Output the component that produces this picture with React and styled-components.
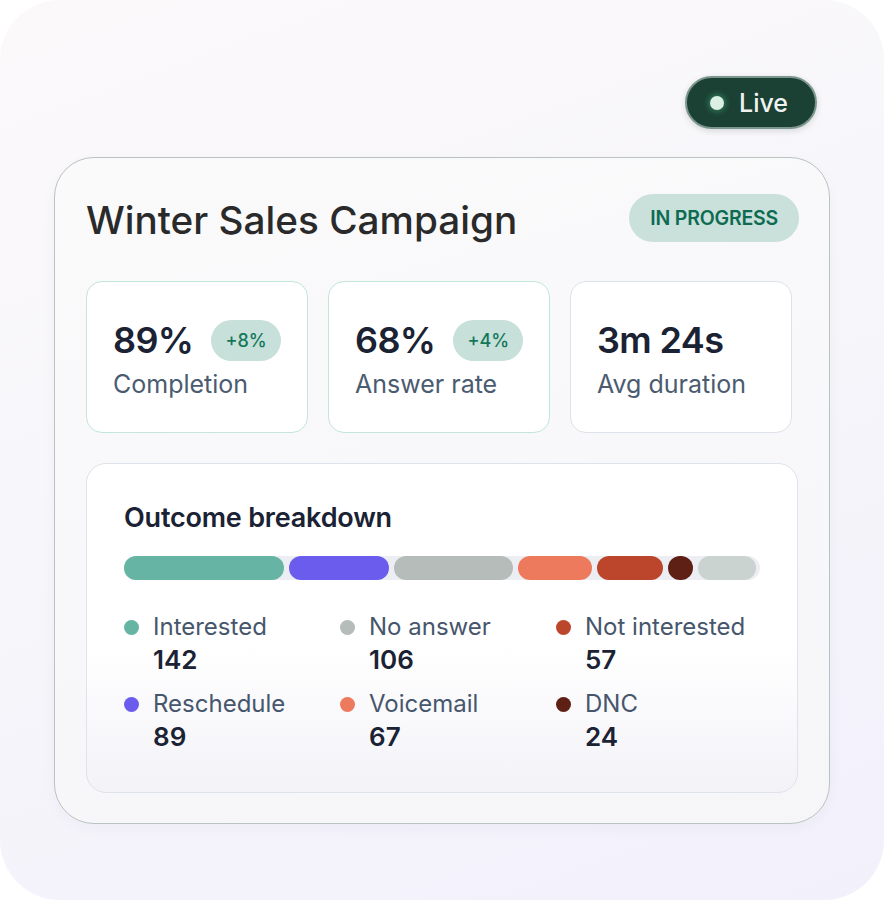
import styled, { createGlobalStyle } from "styled-components"

const GlobalStyle = createGlobalStyle`
  * { box-sizing: border-box; }
  body {
    margin: 0;
    background: #ffffff;
    font-family: Inter, "Noto Sans", sans-serif;
  }
`

const stats = [
  { value: "89%", label: "Completion", delta: "+8%" },
  { value: "68%", label: "Answer rate", delta: "+4%" },
  { value: "3m 24s", label: "Avg duration" },
]

const segments = [
  { color: "#66b5a4", w: 160 },
  { color: "#6b5ced", w: 100 },
  { color: "#b5bcba", w: 119 },
  { color: "#ee7a5e", w: 74 },
  { color: "#bb462b", w: 66 },
  { color: "#5e2015", w: 25 },
  { color: "#cbd3d0", w: 58 },
]

const outcomes = [
  { label: "Interested", count: 142, color: "#66b5a4" },
  { label: "No answer", count: 106, color: "#b5bcba" },
  { label: "Not interested", count: 57, color: "#bb462b" },
  { label: "Reschedule", count: 89, color: "#6b5ced" },
  { label: "Voicemail", count: 67, color: "#ee7a5e" },
  { label: "DNC", count: 24, color: "#5e2015" },
]

export default function App() {
  return (
    <>
      <GlobalStyle />
      <Page>
        <TopBar>
          <LivePill>
            <LiveDot />
            Live
          </LivePill>
        </TopBar>
        <Card>
          <Header>
            <Title>Winter Sales Campaign</Title>
            <Status>IN PROGRESS</Status>
          </Header>

          <Stats>
            {stats.map(s => (
              <StatCard key={s.label} $accent={!!s.delta}>
                <ValueRow>
                  <Value>{s.value}</Value>
                  {s.delta && <Delta>{s.delta}</Delta>}
                </ValueRow>
                <StatLabel>{s.label}</StatLabel>
              </StatCard>
            ))}
          </Stats>

          <Outcome>
            <OutcomeTitle>Outcome breakdown</OutcomeTitle>
            <Bar>
              {segments.map((seg, i) => (
                <Segment key={i} $color={seg.color} $w={seg.w} />
              ))}
            </Bar>
            <Legend>
              {outcomes.map(o => (
                <LegendItem key={o.label}>
                  <Dot $color={o.color} />
                  <LegendText>
                    <LegendLabel>{o.label}</LegendLabel>
                    <LegendCount>{o.count}</LegendCount>
                  </LegendText>
                </LegendItem>
              ))}
            </Legend>
          </Outcome>
        </Card>
      </Page>
    </>
  )
}

const Page = styled.div`
  width: 884px;
  height: 900px;
  border-radius: 60px;
  background: linear-gradient(160deg, #fbf9fa 0%, #f7f6fa 45%, #f2f0fb 100%);
  padding: 76px 67px 0 54px;
  display: flex;
  flex-direction: column;
`

const TopBar = styled.div`
  display: flex;
  justify-content: flex-end;
  margin-bottom: 28px;
`

const LivePill = styled.div`
  height: 53px;
  width: 132px;
  border-radius: 27px;
  background: #1b4034;
  border: 2px solid #7d968d;
  box-shadow: 0 2px 6px rgba(20, 50, 40, 0.15);
  display: flex;
  align-items: center;
  padding-left: 23px;
  gap: 15px;
  color: #eef3f0;
  font-size: 25px;
  font-weight: 500;
`

const LiveDot = styled.span`
  width: 14px;
  height: 14px;
  border-radius: 50%;
  background: #dcefe5;
  box-shadow: 0 0 6px 1px rgba(80, 200, 140, 0.55);
`

const Card = styled.section`
  width: 776px;
  height: 667px;
  border-radius: 40px;
  border: 1.5px solid #b9c3c0;
  background: linear-gradient(165deg, #fafafb 0%, #f6f6f9 100%);
  box-shadow: 0 4px 14px rgba(60, 60, 90, 0.04);
  padding: 36px 30px 0 31px;
`

const Header = styled.div`
  display: flex;
  align-items: center;
  justify-content: space-between;
  height: 48px;
`

const Title = styled.h1`
  margin: 0;
  font-size: 38.7px;
  font-weight: 500;
  color: #2a2a2b;
  padding-top: 4px;
`

const Status = styled.span`
  height: 48px;
  padding: 0 21px;
  border-radius: 24px;
  background: #c9e0db;
  color: #0e6b52;
  font-size: 19.5px;
  font-weight: 600;
  display: flex;
  align-items: center;
  letter-spacing: -0.2px;
`

const Stats = styled.div`
  margin-top: 39px;
  display: grid;
  grid-template-columns: repeat(3, 222px);
  gap: 20px;
`

const StatCard = styled.div`
  height: 152px;
  border-radius: 16px;
  background: #ffffff;
  border: 1.5px solid ${p => (p.$accent ? "#c2e5dc" : "#dde2ea")};
  padding: 4px 26px 0;
  display: flex;
  flex-direction: column;
  justify-content: center;
`

const ValueRow = styled.div`
  display: flex;
  align-items: center;
  gap: 18px;
  height: 42px;
`

const Value = styled.span`
  font-size: 36px;
  font-weight: 600;
  color: #1a2233;
  letter-spacing: -0.6px;
`

const Delta = styled.span`
  height: 41px;
  padding: 0 14px;
  border-radius: 21px;
  background: #c7e0da;
  color: #14775a;
  font-size: 18px;
  font-weight: 500;
  display: flex;
  align-items: center;
`

const StatLabel = styled.div`
  margin-top: 8px;
  font-size: 25px;
  color: #4b5b70;
`

const Outcome = styled.div`
  margin-top: 30px;
  width: 712px;
  height: 330px;
  border-radius: 20px;
  border: 1.5px solid #dfe3ea;
  background: linear-gradient(180deg, #ffffff 0%, #ffffff 55%, #f3f2f7 100%);
  padding: 37px 38px 0 37px;
`

const OutcomeTitle = styled.h2`
  margin: 0;
  font-size: 27px;
  font-weight: 600;
  color: #1a2233;
  letter-spacing: -0.2px;
`

const Bar = styled.div`
  margin-top: 22px;
  width: 636px;
  height: 24px;
  border-radius: 12px;
  background: #eceef3;
  display: flex;
  gap: 5px;
`

const Segment = styled.span`
  width: ${p => p.$w}px;
  height: 24px;
  border-radius: 12px;
  background: ${p => p.$color};
`

const Legend = styled.div`
  margin-top: 32px;
  display: grid;
  grid-template-columns: repeat(3, 216px);
  row-gap: 11px;
`

const LegendItem = styled.div`
  display: flex;
  align-items: flex-start;
  gap: 14px;
`

const Dot = styled.span`
  margin-top: 8px;
  width: 15px;
  height: 15px;
  border-radius: 50%;
  background: ${p => p.$color};
  flex-shrink: 0;
`

const LegendText = styled.div`
  display: flex;
  flex-direction: column;
`

const LegendLabel = styled.span`
  font-size: 24px;
  line-height: 30px;
  color: #46566c;
`

const LegendCount = styled.span`
  font-size: 26px;
  line-height: 36px;
  font-weight: 600;
  color: #1a2233;
`
